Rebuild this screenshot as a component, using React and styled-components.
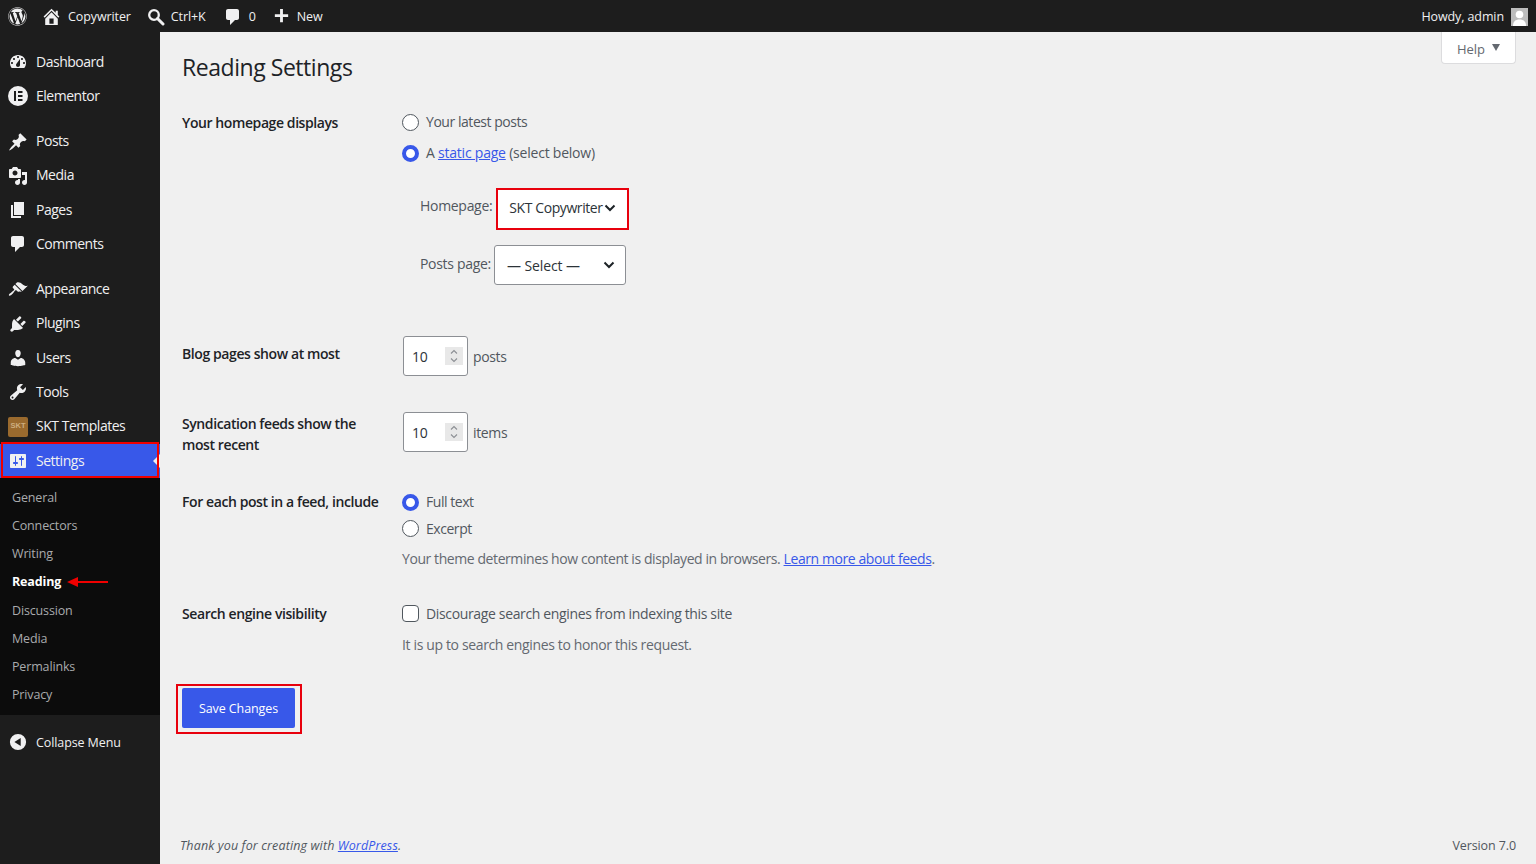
import styled, { createGlobalStyle } from "styled-components";
import { FaWordpress } from "react-icons/fa";

const GlobalStyle = createGlobalStyle`
    html, body {
        margin: 0;
        padding: 0;
        background: #f0f0f0;
        font-family: "Open Sans", "Liberation Sans", sans-serif;
        font-size: 14px;
        color: #3c434a;
    }
    * { box-sizing: border-box; }
`

const Page = styled.div`
    height: 864px;
    display: flex;
    flex-direction: column;
    overflow: hidden;
`

const AdminBar = styled.header`
    height: 32px;
    flex: none;
    background: #1d1d1d;
    color: #f0f0f1;
    font-size: 12.5px;
    letter-spacing: -0.1px;
    display: flex;
    align-items: center;
    justify-content: space-between;
    padding: 1px 8px 0 8px;
`

const BarGroup = styled.div`
    display: flex;
    align-items: center;
`

const BarItem = styled.span`
    display: flex;
    align-items: center;
    gap: ${props => props.gap || 7}px;
    margin-left: ${props => props.left || 0}px;
    white-space: nowrap;
`

const Avatar = styled.span`
    width: 17px;
    height: 18px;
    background: #bcbcbc;
    display: block;
    overflow: hidden;
`

const Body = styled.div`
    flex: 1;
    display: flex;
    min-height: 0;
`

const Sidebar = styled.nav`
    width: 160px;
    flex: none;
    background: #1d1d1d;
    padding-top: 13px;
    color: #f0f0f1;
`

const MenuGroup = styled.div`
    margin-bottom: ${props => props.last ? 0 : 10.7}px;
`

const MenuItem = styled.a`
    position: relative;
    height: 34.33px;
    display: flex;
    align-items: center;
    gap: 8px;
    padding: 0 0 2px 8px;
    letter-spacing: -0.48px;
    color: #f0f0f1;
    background: ${props => props.active ? "#3858e9" : "transparent"};

    ${props => props.active ? `
        &::before {
            content: "";
            position: absolute;
            right: 0;
            top: 10px;
            border: 7px solid transparent;
            border-right-color: #f0f0f0;
            border-left-width: 0;
        }
        &::after {
            content: "";
            position: absolute;
            left: 1px;
            right: 1px;
            top: -2px;
            bottom: 0;
            border: 2px solid #f00000;
        }` : ""}
`

const MenuIcon = styled.span`
    width: 20px;
    height: 20px;
    flex: none;
    display: block;
    margin-top: 2px;
    color: #f0f0f1;
    svg { display: block; width: 20px; height: 20px; fill: currentColor; }
`

const SktBadge = styled.span`
    width: 20px;
    height: 20px;
    flex: none;
    margin-top: 2px;
    background: #9a6a2e;
    border-radius: 2px;
    color: #cdae80;
    font-size: 7.5px;
    font-weight: 700;
    line-height: 17px;
    text-align: center;
    letter-spacing: 0;
    font-family: "Liberation Sans", sans-serif;
`

const SubMenu = styled.div`
    background: #0c0c0c;
    padding: 5.5px 0 5.5px;
`

const SubItem = styled.a`
    position: relative;
    display: block;
    height: 28.2px;
    line-height: 28.2px;
    padding-left: 12px;
    font-size: 12.5px;
    letter-spacing: -0.15px;
    color: ${props => props.current ? "#fff" : "#a9abad"};
    font-weight: ${props => props.current ? 700 : 400};
`

const RedArrow = styled.svg`
    position: absolute;
    left: 67px;
    top: 8px;
`

const CollapseRow = styled.div`
    height: 56px;
    display: flex;
    align-items: center;
    gap: 9px;
    padding: 0 0 1px 9px;
    font-size: 12.5px;
    letter-spacing: -0.1px;
    color: #f0f0f1;
`

const Main = styled.main`
    position: relative;
    flex: 1;
    display: flex;
    flex-direction: column;
    min-width: 0;
`

const HelpTab = styled.div`
    position: absolute;
    top: 0;
    right: 20px;
    width: 75px;
    height: 32px;
    padding-top: 2px;
    background: #fff;
    border: 1px solid #dcdcde;
    border-top: none;
    border-radius: 0 0 4px 4px;
    color: #646970;
    font-size: 13px;
    display: flex;
    align-items: center;
    justify-content: center;
    gap: 7px;
    &::after {
        content: "";
        margin-top: -2px;
        border: 4.5px solid transparent;
        border-top: 7px solid #646970;
        border-bottom: none;
    }
`

const Wrap = styled.div`
    padding: 20px 0 0 22px;
`

const Heading = styled.h1`
    margin: 0;
    font-size: 23px;
    font-weight: 400;
    line-height: 30px;
    letter-spacing: -0.45px;
    color: #1d2327;
`

const Row = styled.section`
    display: grid;
    grid-template-columns: 220px 1fr;
    margin-top: ${props => props.top}px;
`

const RowLabel = styled.div`
    font-weight: 600;
    line-height: 21px;
    letter-spacing: -0.41px;
    color: #1d2327;
    padding-top: ${props => props.pad || 0}px;
    width: 204px;
`

const Option = styled.label`
    display: flex;
    align-items: center;
    gap: 7px;
    height: 20px;
    margin-top: ${props => props.top || 0}px;
    color: #50575e;
    letter-spacing: ${props => props.spacing || -0.45}px;
`

const Radio = styled.span`
    width: 17px;
    height: 17px;
    flex: none;
    margin-top: ${props => props.drop || 0}px;
    border-radius: 50%;
    background: #fff;
    border: ${props => props.checked ? "4.5px solid #3858e9" : "1.5px solid #50575e"};
`

const Check = styled.span`
    width: 17px;
    height: 17px;
    flex: none;
    border-radius: 4px;
    background: #fff;
    border: 1.5px solid #50575e;
`

const Link = styled.a`
    color: #3858e9;
    text-decoration: underline;
`

const SelectRow = styled.div`
    display: flex;
    align-items: center;
    height: ${props => props.height}px;
    margin-top: ${props => props.top}px;
    padding-left: 18px;
    gap: ${props => props.gap}px;
    color: #50575e;
    letter-spacing: -0.3px;
`

const SelectLabel = styled.span`
    margin-top: ${props => props.lift}px;
`

const SelectBox = styled.div`
    width: ${props => props.width}px;
    height: ${props => props.height}px;
    background: #fff;
    border: ${props => props.marked ? "2px solid #e8000d" : "1px solid #8c8f94"};
    border-radius: ${props => props.marked ? 0 : 3}px;
    display: flex;
    align-items: center;
    justify-content: space-between;
    padding: ${props => props.marked ? "0 11px 3px 11px" : "0 10px 0 12px"};
    color: #2c3338;
    letter-spacing: ${props => props.marked ? -0.42 : -0.1}px;
`

const NumberLine = styled.div`
    display: flex;
    align-items: center;
    gap: 5px;
    color: #50575e;
    letter-spacing: -0.35px;
    margin-left: 1px;
`

const NumberBox = styled.div`
    width: 65px;
    height: 40px;
    background: #fff;
    border: 1px solid #8c8f94;
    border-radius: 3px;
    display: flex;
    align-items: center;
    justify-content: space-between;
    padding: 0 4px 0 8px;
    color: #2c3338;
`

const Spinner = styled.span`
    width: 18px;
    height: 18px;
    background: #e8e8e8;
    display: block;
    svg { display: block; }
`

const Hint = styled.p`
    margin: ${props => props.top}px 0 0;
    line-height: 20px;
    color: #646970;
    letter-spacing: ${props => props.spacing || -0.42}px;
`

const SaveFrame = styled.div`
    width: fit-content;
    margin: 29px 0 0 -6px;
    border: 2px solid #e8000d;
    padding: 2px 5px 4px 4px;
`

const SaveButton = styled.button`
    display: block;
    width: 113px;
    height: 40px;
    border: none;
    border-radius: 2px;
    background: #3858e9;
    color: #fff;
    font: inherit;
    font-size: 12.5px;
    letter-spacing: -0.1px;
`

const Footer = styled.footer`
    margin-top: auto;
    display: flex;
    justify-content: space-between;
    padding: 0 20px 8px;
    line-height: 20px;
    font-size: 12.5px;
    color: #50575e;
    letter-spacing: -0.1px;
`

const Thanks = styled.em`
    letter-spacing: 0.13px;
`

const paths = {
    dashboard: "M3.76 16h12.48c1.1-1.37 1.76-3.11 1.76-5 0-4.42-3.58-8-8-8s-8 3.58-8 8c0 1.89.66 3.63 1.76 5zM10 4c.55 0 1 .45 1 1s-.45 1-1 1-1-.45-1-1 .45-1 1-1zM6 6c.55 0 1 .45 1 1s-.45 1-1 1-1-.45-1-1 .45-1 1-1zm8 0c.55 0 1 .45 1 1s-.45 1-1 1-1-.45-1-1 .45-1 1-1zm-5.37 5.55L12 7v6c0 1.1-.9 2-2 2s-2-.9-2-2c0-.57.24-1.08.63-1.45zM4 10c.55 0 1 .45 1 1s-.45 1-1 1-1-.45-1-1 .45-1 1-1zm12 0c.55 0 1 .45 1 1s-.45 1-1 1-1-.45-1-1 .45-1 1-1z",
    elementor: "M10 0a10 10 0 1 0 0 20 10 10 0 0 0 0-20zM6 5h2v10H6V5zm4 0h4.500v2H10V5zm0 4h4.500v2H10V9zm0 4h4.500v2H10v-2z",
    posts: "M10.44 3.02l1.82-1.82 6.36 6.35-1.83 1.82c-1.05-.68-2.48-.57-3.41.36l-.75.75c-.92.93-1.04 2.35-.35 3.41l-1.83 1.82-2.41-2.41-2.8 2.79c-.42.42-3.38 2.71-3.8 2.29s1.86-3.39 2.28-3.81l2.79-2.79L4.1 9.36l1.83-1.82c1.05.69 2.48.57 3.4-.36l.75-.75c.93-.92 1.05-2.35.36-3.41z",
    media: "M13 11V4c0-.55-.45-1-1-1h-1.67L9 1H5L3.67 3H2c-.55 0-1 .45-1 1v7c0 .55.45 1 1 1h10c.55 0 1-.45 1-1zM7 4.500c1.380 0 2.500 1.120 2.500 2.500S8.380 9.500 7 9.500 4.500 8.380 4.500 7 5.620 4.500 7 4.500zM14 6h5v10.500c0 1.380-1.120 2.500-2.500 2.500S14 17.880 14 16.500s1.120-2.500 2.500-2.500c.17 0 .34.02.5.05V9h-3V6zm-4 8.050V13h2v3.500c0 1.380-1.120 2.500-2.500 2.500S7 17.880 7 16.500 8.120 14 9.500 14c.17 0 .34.02.5.05z",
    pages: "M6 15V2h10v13H6zm-1 1h8v2H3V5h2v11z",
    comments: "M5 2h9c1.100 0 2 .9 2 2v7c0 1.100-.9 2-2 2h-2l-5 5v-5H5c-1.100 0-2-.9-2-2V4c0-1.100.9-2 2-2z",
    appearance: "M14.480 11.060L7.410 3.990l1.500-1.500c.5-.56 2.300-.47 3.510.32 1.210.8 1.430 1.280 2.910 2.100 1.180.64 2.450 1.260 4.450.85zm-.71.71L6.700 4.700 4.930 6.470c-.39.39-.39 1.020 0 1.410l1.060 1.060c.39.39.39 1.030 0 1.420-.6.6-1.430 1.110-2.210 1.690-.35.26-.7.53-1.010.84C1.430 13.230.4 14.890 1.010 15.500c.61.610 2.270-.42 3.610-1.770.31-.31.58-.66.840-1.010.58-.78 1.090-1.610 1.690-2.210.39-.39 1.030-.39 1.420 0l1.060 1.060c.39.39 1.020.39 1.410 0z",
    plugins: "M13.110 4.360L9.870 7.600 8 5.730l3.240-3.240c.35-.34 1.050-.2 1.560.32.52.51.66 1.210.31 1.550zm-8 1.770l.91-1.120 9.010 9.010-1.190.84c-.71.71-2.630 1.160-3.820 1.160H6.140L4.900 17.260c-.59.59-1.540.59-2.120 0-.59-.58-.59-1.530 0-2.120l1.240-1.240v-3.880c0-1.130.4-3.190 1.090-3.890zm7.260 3.970l3.240-3.240c.34-.35 1.040-.21 1.550.31.52.51.66 1.210.31 1.550l-3.240 3.250z",
    users: "M10 9.250c-2.270 0-2.730-3.440-2.730-3.440C7 4.020 7.820 2 9.970 2c2.160 0 2.980 2.020 2.710 3.810 0 0-.41 3.440-2.680 3.440zm0 2.570L12.720 10c2.390 0 4.520 2.330 4.520 4.530v2.490s-3.650 1.130-7.240 1.130c-3.650 0-7.240-1.130-7.240-1.130v-2.490c0-2.250 1.940-4.480 4.470-4.480z",
    tools: "M16.680 9.770c-1.340 1.340-3.300 1.670-4.950.99l-5.410 6.520c-.99.99-2.590.99-3.580 0s-.99-2.590 0-3.570l6.520-5.420c-.68-1.650-.35-3.610.99-4.950 1.280-1.280 3.120-1.620 4.720-1.060l-2.890 2.890 2.820 2.820 2.860-2.870c.53 1.580.18 3.390-1.080 4.650zM3.810 16.210c.4.39 1.040.39 1.430 0 .4-.4.4-1.040 0-1.430-.39-.4-1.030-.4-1.430 0-.39.39-.39 1.030 0 1.430z",
    settings: "M18 16V4c0-.55-.45-1-1-1H3c-.55 0-1 .45-1 1v12c0 .55.45 1 1 1h14c.55 0 1-.45 1-1zM8 11h1c.55 0 1 .45 1 1s-.45 1-1 1H8v1.500c0 .28-.22.5-.5.5s-.5-.22-.5-.5V13H6c-.55 0-1-.45-1-1s.45-1 1-1h1V5.500c0-.28.22-.5.5-.5s.5.22.5.5V11zm5-2h-1c-.55 0-1-.45-1-1s.45-1 1-1h1V5.500c0-.28.22-.5.5-.5s.5.22.5.5V7h1c.55 0 1 .45 1 1s-.45 1-1 1h-1v5.500c0 .28-.22.5-.5.5s-.5-.22-.5-.5V9z",
    collapse: "M10 1a9 9 0 1 0 0 18 9 9 0 0 0 0-18zm3 4.500v9L6 10z",
    home: "M16 8.500l1.530 1.530-1.060 1.060L10 4.620l-6.470 6.470-1.060-1.060L10 2.500l4 4v-2h2v4zm-6-2.460l6 5.990V18H4v-5.970zM12 17v-5H8v5h4z",
    plus: "M17 7.500v3h-5.500V16h-3v-5.500H3v-3h5.500V2h3v5.500z",
}

const Glyph = ({ name, size = 20, color = "#f0f0f1" }) => (
    <svg width={size} height={size} viewBox="0 0 20 20" fill={color} fillRule="evenodd" style={{ display: "block" }}>
        <path d={paths[name]} />
    </svg>
)

const SearchIcon = () => (
    <svg width="18" height="18" viewBox="0 0 18 18" style={{ display: "block" }}>
        <circle cx="7" cy="7" r="4.800" fill="none" stroke="#f0f0f1" strokeWidth="2.300" />
        <path d="M10.500 10.500L16 16" stroke="#f0f0f1" strokeWidth="3" strokeLinecap="round" />
    </svg>
)

const Chevron = () => (
    <svg width="12" height="8" viewBox="0 0 12 8" style={{ display: "block", flex: "none" }}>
        <path d="M1.500 1.500L6 6l4.500-4.500" fill="none" stroke="#1d2327" strokeWidth="2" />
    </svg>
)

const SpinIcon = () => (
    <svg width="18" height="18" viewBox="0 0 18 18">
        <path d="M6 6.500L9 3.500l3 3M6 11.500l3 3 3-3" fill="none" stroke="#8c8f94" strokeWidth="1.100" />
    </svg>
)

const menuGroups = [
    [["Dashboard", "dashboard"], ["Elementor", "elementor"]],
    [["Posts", "posts"], ["Media", "media"], ["Pages", "pages"], ["Comments", "comments"]],
    [["Appearance", "appearance"], ["Plugins", "plugins"], ["Users", "users"], ["Tools", "tools"], ["SKT Templates", "skt"], ["Settings", "settings"]],
]

const subItems = ["General", "Connectors", "Writing", "Reading", "Discussion", "Media", "Permalinks", "Privacy"]

export default function App() {
    return (
        <Page>
            <GlobalStyle />
            <AdminBar>
                <BarGroup>
                    <BarItem><FaWordpress size={19} color="#f0f0f1" /></BarItem>
                    <BarItem left={14} gap={6}><Glyph name="home" size={21} />Copywriter</BarItem>
                    <BarItem left={16} gap={6}><SearchIcon />Ctrl+K</BarItem>
                    <BarItem left={17} gap={6}><Glyph name="comments" size={20} />0</BarItem>
                    <BarItem left={16} gap={6}><Glyph name="plus" size={19} />New</BarItem>
                </BarGroup>
                <BarItem gap={7}>
                    Howdy, admin
                    <Avatar>
                        <svg width="17" height="18" viewBox="0 0 17 18" fill="#fff">
                            <circle cx="8.500" cy="6.500" r="3.800" />
                            <path d="M2 18c0-4.500 2.500-6.500 6.500-6.500S15 13.500 15 18z" />
                        </svg>
                    </Avatar>
                </BarItem>
            </AdminBar>
            <Body>
                <Sidebar>
                    {menuGroups.map((group, i) => (
                        <MenuGroup key={i} last={i === menuGroups.length - 1}>
                            {group.map(([label, icon]) => (
                                <MenuItem key={label} active={label === "Settings"}>
                                    {icon === "skt"
                                        ? <SktBadge>SKT</SktBadge>
                                        : <MenuIcon><svg viewBox="0 0 20 20" fillRule="evenodd"><path d={paths[icon]} /></svg></MenuIcon>}
                                    {label}
                                </MenuItem>
                            ))}
                        </MenuGroup>
                    ))}
                    <SubMenu>
                        {subItems.map(item => (
                            <SubItem key={item} current={item === "Reading"}>
                                {item}
                                {item === "Reading" && (
                                    <RedArrow width="42" height="12" viewBox="0 0 42 12">
                                        <path d="M0 6L11 1v4h30v2H11v4z" fill="#f00000" />
                                    </RedArrow>
                                )}
                            </SubItem>
                        ))}
                    </SubMenu>
                    <CollapseRow><Glyph name="collapse" size={18} />Collapse Menu</CollapseRow>
                </Sidebar>
                <Main>
                    <HelpTab>Help</HelpTab>
                    <Wrap>
                        <Heading>Reading Settings</Heading>
                        <Row top={30}>
                            <RowLabel>Your homepage displays</RowLabel>
                            <div>
                                <Option top={-1}><Radio drop={2} />Your latest posts</Option>
                                <Option top={11} spacing={-0.22}><Radio checked drop={2} /><span>A <Link>static page</Link> (select below)</span></Option>
                                <SelectRow height={42} top={26} gap={4}>
                                    <SelectLabel lift={-7}>Homepage:</SelectLabel>
                                    <SelectBox marked width={133} height={42}>SKT Copywriter<Chevron /></SelectBox>
                                </SelectRow>
                                <SelectRow height={40} top={15} gap={3}>
                                    <SelectLabel lift={-3}>Posts page:</SelectLabel>
                                    <SelectBox width={132} height={40}>— Select —<Chevron /></SelectBox>
                                </SelectRow>
                            </div>
                        </Row>
                        <Row top={51}>
                            <RowLabel pad={7}>Blog pages show at most</RowLabel>
                            <NumberLine>
                                <NumberBox>10<Spinner><SpinIcon /></Spinner></NumberBox>
                                posts
                            </NumberLine>
                        </Row>
                        <Row top={33}>
                            <RowLabel pad={4}>Syndication feeds show the most recent</RowLabel>
                            <NumberLine>
                                <NumberBox>10<Spinner><SpinIcon /></Spinner></NumberBox>
                                items
                            </NumberLine>
                        </Row>
                        <Row top={36}>
                            <RowLabel>For each post in a feed, include</RowLabel>
                            <div>
                                <Option><Radio checked drop={2} />Full text</Option>
                                <Option top={7}><Radio />Excerpt</Option>
                                <Hint top={11}>Your theme determines how content is displayed in browsers. <Link>Learn more about feeds</Link>.</Hint>
                            </div>
                        </Row>
                        <Row top={34}>
                            <RowLabel>Search engine visibility</RowLabel>
                            <div>
                                <Option spacing={-0.35}><Check />Discourage search engines from indexing this site</Option>
                                <Hint top={12} spacing={-0.36}>It is up to search engines to honor this request.</Hint>
                            </div>
                        </Row>
                        <SaveFrame><SaveButton>Save Changes</SaveButton></SaveFrame>
                    </Wrap>
                    <Footer>
                        <Thanks>Thank you for creating with <Link>WordPress</Link>.</Thanks>
                        <span>Version 7.0</span>
                    </Footer>
                </Main>
            </Body>
        </Page>
    )
}
